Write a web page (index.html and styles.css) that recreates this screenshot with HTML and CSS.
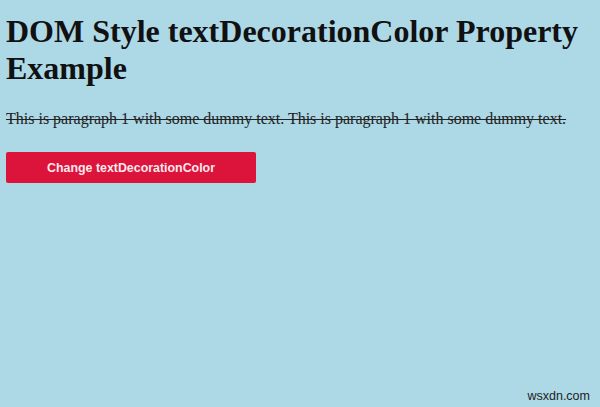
FILE: index.html
```html
<!DOCTYPE html>
<html lang="en">
<head>
    <meta charset="UTF-8">
    <title>DOM Style textDecorationColor Property</title>
    <link rel="stylesheet" href="styles.css">
</head>
<body>
    <h1>DOM Style textDecorationColor Property Example</h1>
    <p id="sample">This is paragraph 1 with some dummy text. This is paragraph 1 with some dummy text.</p>
    <button class="btn" onclick="changeColor()">Change textDecorationColor</button>
    <span class="mark">wsxdn.com</span>
    <script>
        function changeColor() {
            document.getElementById('sample').style.textDecorationColor = 'red';
        }
    </script>
</body>
</html>
```
FILE: styles.css
```css
body {
    margin: 6px;
    font-family: "Liberation Serif", serif;
    background-color: lightblue;
    color: #111;
}

h1 {
    font-size: 32px;
    margin: 7px 0 23px;
}

p {
    font-size: 16px;
    margin: 0 0 24px;
    text-decoration: line-through;
    color: #222;
}

.btn {
    display: block;
    width: 250px;
    height: 31px;
    border: none;
    border-radius: 2px;
    background-color: crimson;
    color: #fbe9ec;
    font-family: "Liberation Sans", Arial, sans-serif;
    font-size: 12.4px;
    font-weight: bold;
}

.mark {
    position: absolute;
    right: 10px;
    bottom: 4px;
    font-family: "Liberation Sans", Arial, sans-serif;
    font-size: 12.5px;
    color: #222;
}
```
